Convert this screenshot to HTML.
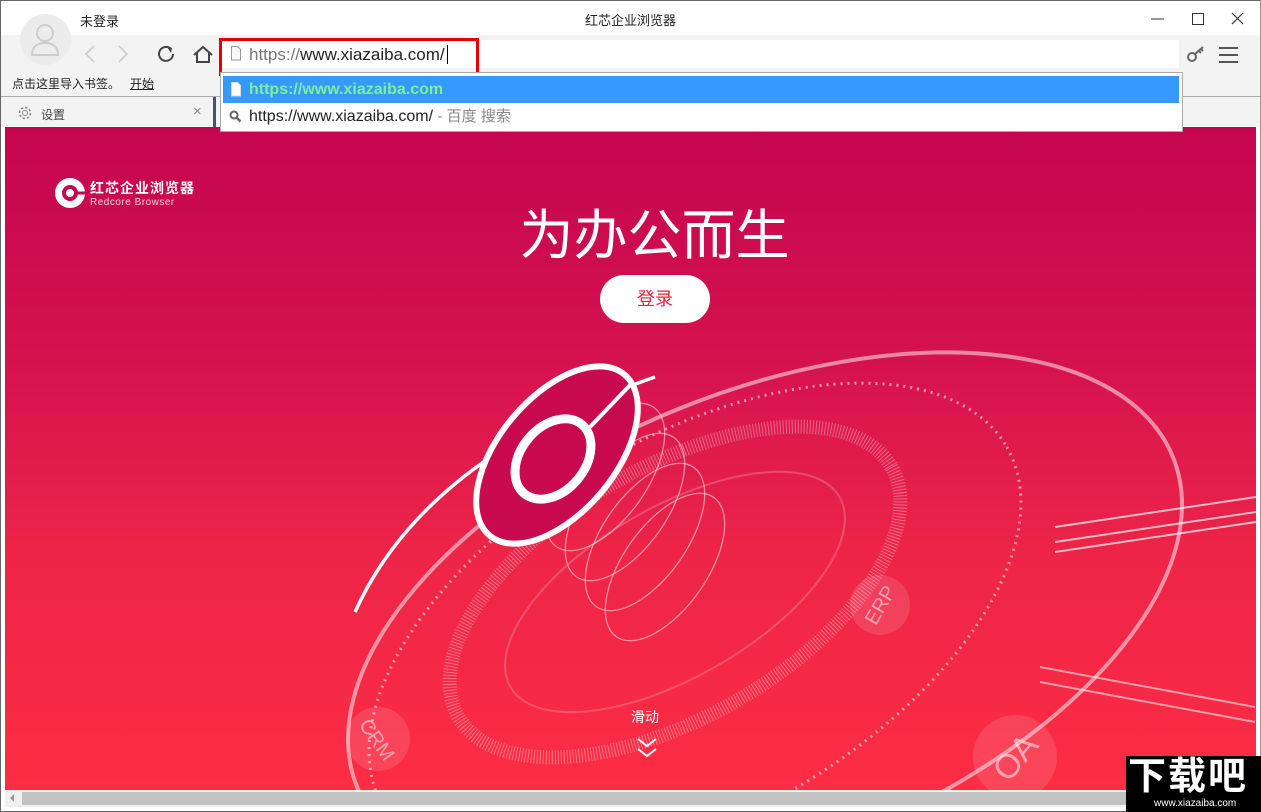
<!DOCTYPE html>
<html><head><meta charset="utf-8"><style>
*{margin:0;padding:0;box-sizing:border-box}
body{width:1261px;height:812px;overflow:hidden;background:#fff;font-family:"Liberation Sans","Noto Sans CJK SC",sans-serif;position:relative;font-size:12px;color:#222}
.a{position:absolute}
</style></head><body>
<div class="a" style="left:0;top:0;width:1261px;height:812px;border:1px solid #666;border-right-color:#999"></div>
<div class="a" style="left:1px;top:35px;width:1259px;height:36px;background:#f3f3f3"></div>
<div class="a" style="left:1px;top:71px;width:1259px;height:56px;background:#f3f3f3"></div>
<div class="a" style="left:20px;top:14px;width:51px;height:51px;border-radius:50%;background:#ececec"></div>
<svg class="a" style="left:30px;top:22px" width="30" height="34" viewBox="0 0 30 34"><circle cx="15" cy="11" r="8" fill="none" stroke="#ccc" stroke-width="2"/><path d="M2 33c0-9 6-12 13-12s13 3 13 12z" fill="none" stroke="#ccc" stroke-width="2"/></svg>
<div class="a" style="left:80px;top:11px;font-size:13px">未登录</div>
<div class="a" style="left:0;width:1261px;top:10px;text-align:center;font-size:13px">红芯企业浏览器</div>
<svg class="a" style="left:1140px;top:8px" width="110" height="22"><path d="M11 11h13" stroke="#333"/><rect x="52.5" y="5.5" width="11" height="11" fill="none" stroke="#333"/><path d="M92 5l11 11M103 5l-11 11" stroke="#333" stroke-width="1.2"/></svg>
<svg class="a" style="left:78px;top:40px" width="140" height="30"><path d="M16 6l-8 8 8 8M41 6l8 8-8 8" fill="none" stroke="#ccc" stroke-width="1.6"/><path d="M93 9a7 7 0 1 0 2 5" fill="none" stroke="#444" stroke-width="2"/><path d="M89 7l5 1-1 5" fill="#444"/><path d="M116 15l9-8 9 8M119 13v9h12v-9" fill="none" stroke="#444" stroke-width="2"/></svg>
<div class="a" style="left:221px;top:40px;width:958px;height:28px;background:#fff"></div>
<div class="a" style="left:219px;top:38px;width:260px;height:38px;border:3px solid #e80000"></div>
<svg class="a" style="left:230px;top:46px" width="12" height="15"><path d="M1.5 .5h6l3 3v10.5h-9z" fill="#f8f8f8" stroke="#999"/></svg>
<div class="a" style="left:249px;top:45px;font-size:17px;color:#222"><span style="color:#777">https://</span>www.xiazaiba.com/<span style="border-left:1px solid #000;margin-left:2px"></span></div>
<svg class="a" style="left:1186px;top:42px" width="60" height="26"><circle cx="6" cy="15" r="4" fill="none" stroke="#666" stroke-width="2"/><path d="M9 12l8-7M13 9l2 2M15 7l2 2" stroke="#666" stroke-width="2"/><path d="M33 6h19M33 13h19M33 20h19" stroke="#555" stroke-width="2"/></svg>
<div class="a" style="left:12px;top:75px;font-size:12px">点击这里导入书签。 &nbsp;&nbsp;<u>开始</u></div>
<div class="a" style="left:1px;top:96px;width:1259px;height:1px;background:#aaa"></div>
<div class="a" style="left:5px;top:97px;width:211px;height:30px;background:#f3f3f3;border-right:3px solid #4a5070"></div>
<svg class="a" style="left:17px;top:105px" width="16" height="16"><circle cx="8" cy="8" r="5.5" fill="none" stroke="#888" stroke-width="1.5" stroke-dasharray="2.5 1.8"/><circle cx="8" cy="8" r="2.5" fill="none" stroke="#888"/></svg>
<div class="a" style="left:41px;top:106px;font-size:12px;color:#444">设置</div>
<div class="a" style="left:193px;top:103px;font-size:15px;color:#888">×</div>
<div class="a" style="left:5px;top:127px;width:1251px;height:663px;background:linear-gradient(180deg,#c5064f 0%,#d4124f 35%,#ee2548 65%,#fc2d44 100%);overflow:hidden">
<svg width="1251" height="663" style="position:absolute;left:0;top:0">
<path d="M1251 370 L1050 400 M1251 385 L1050 415 M1251 395 L1050 425" stroke="rgba(255,255,255,.7)" stroke-width="2"/>
<path d="M1035 540l215 40M1035 555l215 40" stroke="rgba(255,255,255,.55)" stroke-width="2"/>
<ellipse cx="760" cy="495" rx="440" ry="230" transform="rotate(-22 760 495)" fill="none" stroke="rgba(255,255,255,.5)" stroke-width="4"/>
<path d="M350 485 Q 420 330 650 250" fill="none" stroke="#fff" stroke-width="3.5"/>
<ellipse cx="690" cy="500" rx="360" ry="190" transform="rotate(-30 690 500)" fill="none" stroke="rgba(255,255,255,.55)" stroke-width="3" stroke-dasharray="2 5"/>
<ellipse cx="670" cy="465" rx="250" ry="125" transform="rotate(-30 670 465)" fill="none" stroke="rgba(255,255,255,.35)" stroke-width="14" stroke-dasharray="1 2"/>
<ellipse cx="670" cy="465" rx="190" ry="85" transform="rotate(-30 670 465)" fill="none" stroke="rgba(255,255,255,.2)" stroke-width="2"/>
<g fill="none" stroke="rgba(255,255,255,.5)" stroke-width="1.3">
<ellipse cx="600" cy="350" rx="85" ry="42" transform="rotate(-55 600 350)"/>
<ellipse cx="620" cy="380" rx="85" ry="42" transform="rotate(-55 620 380)"/>
<ellipse cx="640" cy="410" rx="85" ry="42" transform="rotate(-55 640 410)"/>
<ellipse cx="660" cy="440" rx="85" ry="42" transform="rotate(-55 660 440)"/>
</g>
<ellipse cx="552" cy="328" rx="105" ry="58" transform="rotate(-50 552 328)" fill="#c90a4f" stroke="#fff" stroke-width="6"/>
<ellipse cx="548" cy="332" rx="45" ry="32" transform="rotate(-50 548 332)" fill="none" stroke="#fff" stroke-width="9"/>
<path d="M585 300L628 255" stroke="#fff" stroke-width="4"/>
<circle cx="875" cy="478" r="30" fill="rgba(255,255,255,.12)"/><text x="875" y="485" font-size="20" fill="rgba(255,255,255,.5)" text-anchor="middle" transform="rotate(-60 875 478)">ERP</text>
<circle cx="373" cy="612" r="32" fill="rgba(255,255,255,.12)"/><text x="373" y="620" font-size="20" fill="rgba(255,255,255,.5)" text-anchor="middle" transform="rotate(55 373 612)">CRM</text>
<circle cx="1010" cy="630" r="42" fill="rgba(255,255,255,.12)"/><text x="1010" y="642" font-size="34" fill="rgba(255,255,255,.5)" text-anchor="middle" transform="rotate(-50 1010 630)">OA</text>
<path d="M633 612l9 7 9-7M633 622l9 7 9-7" fill="none" stroke="#fff" stroke-width="2"/>
</svg>
<svg class="a" style="left:50px;top:51px" width="30" height="30"><circle cx="15" cy="15" r="15" fill="#fff"/><circle cx="15" cy="15" r="6" fill="none" stroke="#c5064f" stroke-width="4"/><path d="M20 15h10" stroke="#c5064f" stroke-width="3"/></svg>
<div class="a" style="left:85px;top:53px;color:#fff;font-size:14px;font-weight:bold;letter-spacing:1px;line-height:16px">红芯企业浏览器</div>
<div class="a" style="left:85px;top:70px;color:rgba(255,255,255,.8);font-size:10px;line-height:11px;letter-spacing:.5px">Redcore Browser</div>
<div class="a" style="left:0;width:1251px;top:76px;text-align:center;color:#fff;font-size:54px;line-height:66px;padding-left:48px">为办公而生</div>
<div class="a" style="left:595px;top:148px;width:110px;height:48px;border-radius:24px;background:#fff;color:#e8203f;font-size:18px;text-align:center;line-height:48px">登录</div>
<div class="a" style="left:626px;top:580px;color:#fff;font-size:14px">滑动</div>
</div>
<div class="a" style="left:220px;top:72px;width:963px;height:60px;background:#fff;border:1px solid #aaa"></div>
<div class="a" style="left:223px;top:76px;width:956px;height:27px;background:#3599fd"></div>
<svg class="a" style="left:230px;top:82px" width="12" height="15"><path d="M1.5 .5h6l3 3v10.5h-9z" fill="#fff" stroke="#ddd"/></svg>
<div class="a" style="left:249px;top:80px;font-size:16px;line-height:20px;font-weight:bold;color:#7cf09a">https://www.xiazaiba.com</div>
<svg class="a" style="left:229px;top:110px" width="14" height="14"><circle cx="5" cy="5" r="3.5" fill="none" stroke="#666" stroke-width="2"/><path d="M7.5 7.5l4 4" stroke="#666" stroke-width="2.5"/></svg>
<div class="a" style="left:249px;top:107px;font-size:16px;line-height:20px;color:#222">https://www.xiazaiba.com/ <span style="color:#888;font-size:15px">- 百度 搜索</span></div>
<div class="a" style="left:5px;top:790px;width:1251px;height:17px;background:#f0f0f0"></div>
<div class="a" style="left:22px;top:792px;width:1230px;height:13px;background:#c2c2c2"></div>
<div class="a" style="left:10px;top:794px;width:0;height:0;border:4px solid transparent;border-right-color:#999;border-left:0"></div>
<div class="a" style="left:1126px;top:756px;width:135px;height:56px;background:#000;overflow:hidden">
<div class="a" style="left:2px;top:0;font-size:38px;line-height:42px;font-weight:bold;color:#fff;letter-spacing:2px">下载吧</div>
<div class="a" style="left:28px;top:42px;font-size:10px;line-height:12px;color:#fff">www.xiazaiba.com</div>
</div>
</body></html>
